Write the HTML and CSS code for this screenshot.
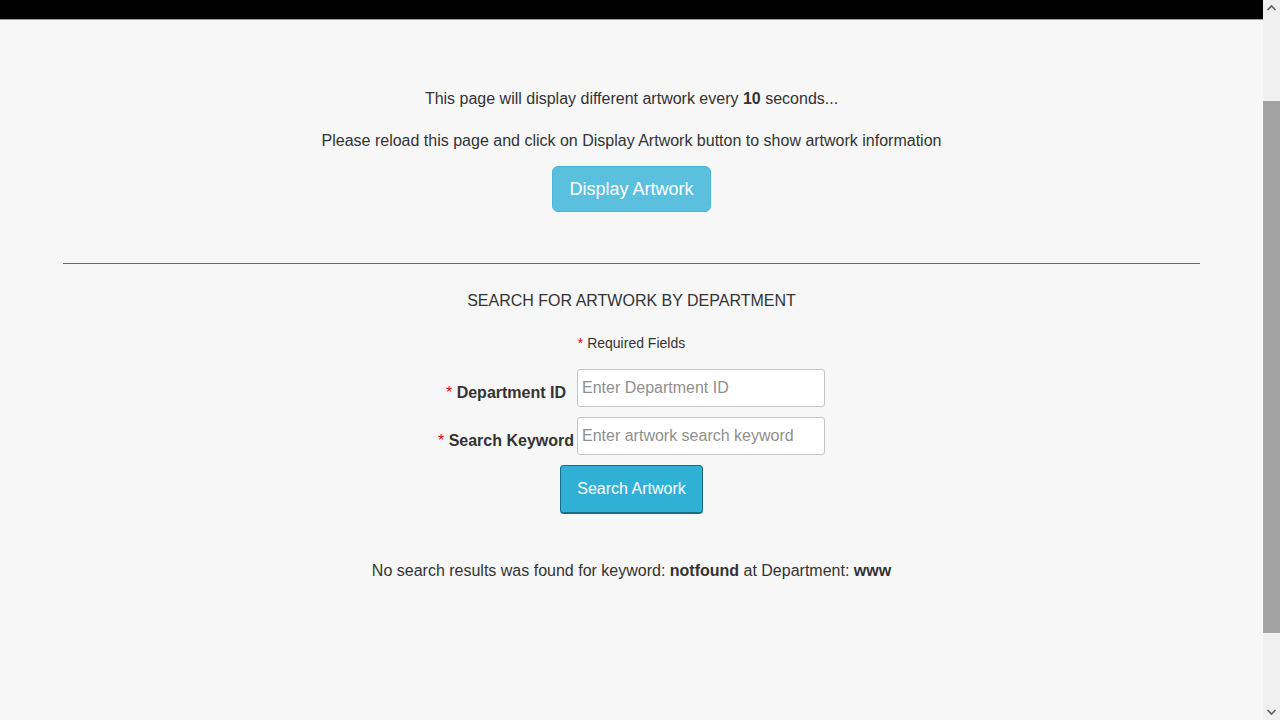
FILE: index.html
```html
<!DOCTYPE html>
<html lang="en">
<head>
<meta charset="utf-8">
<title>Artwork</title>
<link rel="stylesheet" href="styles.css">
</head>
<body>
<div class="window">
  <div class="page">
    <div class="topbar"></div>
    <section class="intro">
      <p class="line first">This page will display different artwork every <b>10</b> seconds...</p>
      <p class="line second">Please reload this page and click on Display Artwork button to show artwork information</p>
      <button class="btn btn-display" type="button">Display Artwork</button>
    </section>
    <hr class="divider">
    <section class="search">
      <h2 class="search-title">SEARCH FOR ARTWORK BY DEPARTMENT</h2>
      <p class="required-note"><span class="star">*</span> Required Fields</p>
      <form class="search-form">
        <div class="field-grid">
          <label class="field-label" for="dept"><span class="star">*</span> Department ID</label>
          <input class="field-input" id="dept" type="text" placeholder="Enter Department ID">
          <label class="field-label" for="kw"><span class="star">*</span> Search Keyword</label>
          <input class="field-input" id="kw" type="text" placeholder="Enter artwork search keyword">
        </div>
        <button class="btn btn-search" type="button">Search Artwork</button>
      </form>
      <p class="result">No search results was found for keyword: <b>notfound</b> at Department: <b>www</b></p>
    </section>
  </div>
  <div class="scrollbar">
    <div class="sb-btn">
      <svg width="17" height="17" viewBox="0 0 17 17"><path d="M4.5 10 L8.5 6 L12.5 10" fill="none" stroke="#606060" stroke-width="1.6"/></svg>
    </div>
    <div class="sb-track"><div class="sb-thumb"></div></div>
    <div class="sb-btn">
      <svg width="17" height="17" viewBox="0 0 17 17"><path d="M4.5 7 L8.5 11 L12.5 7" fill="none" stroke="#606060" stroke-width="1.6"/></svg>
    </div>
  </div>
</div>
</body>
</html>
```

FILE: styles.css
```css
html, body {
  margin: 0;
  padding: 0;
  height: 720px;
  overflow: hidden;
}
body {
  background: #f7f7f7;
  font-family: "Liberation Sans", Arial, sans-serif;
  font-size: 16px;
  color: #333;
}
.window {
  display: flex;
  height: 720px;
}
.page {
  flex: 1;
  min-width: 0;
}
.topbar {
  height: 19px;
  background: #000;
  border-bottom: 1px solid #9a9a9a;
}
.intro {
  display: flex;
  flex-direction: column;
  align-items: center;
  padding-top: 68px;
}
.line {
  margin: 0;
  line-height: 22px;
  text-align: center;
}
.second {
  margin-top: 20px;
}
.btn {
  font-family: "Liberation Sans", Arial, sans-serif;
  color: #fff;
  cursor: pointer;
}
.btn-display {
  margin-top: 14px;
  font-size: 18px;
  line-height: 24px;
  padding: 10px 16px;
  background: #5bc0de;
  border: 1px solid #46b8da;
  border-radius: 6px;
}
.divider {
  width: 90%;
  margin: 51px auto 0;
  border: 0;
  border-top: 1px solid #666;
  height: 0;
}
.search {
  display: flex;
  flex-direction: column;
  align-items: center;
}
.search-title {
  margin: 26px 0 0;
  font-size: 16px;
  font-weight: normal;
  line-height: 22px;
}
.required-note {
  margin: 21px 0 0;
  font-size: 14px;
  line-height: 20px;
}
.star {
  color: #e00;
  font-weight: normal;
}
.search-form {
  margin-top: 16px;
  display: flex;
  flex-direction: column;
  align-items: center;
}
.field-grid {
  display: grid;
  grid-template-columns: auto 248px;
  column-gap: 3px;
  row-gap: 10px;
}
.field-label {
  font-weight: bold;
  text-align: center;
  line-height: 22px;
  padding-top: 13px;
}
.field-input {
  box-sizing: border-box;
  width: 248px;
  height: 38px;
  margin: 0;
  padding: 6px 4px;
  font-family: "Liberation Sans", Arial, sans-serif;
  font-size: 16px;
  color: #333;
  background: #fff;
  border: 1px solid #c4c4c4;
  border-radius: 3px;
}
.field-input::placeholder {
  color: #8f8f8f;
}
.btn-search {
  margin-top: 10px;
  font-size: 16px;
  line-height: 22px;
  padding: 12px 16px;
  background: #31b0d5;
  border: 1px solid #1b6d85;
  border-bottom-width: 2px;
  border-radius: 4px;
}
.result {
  margin: 46px 0 0;
  line-height: 22px;
  text-align: center;
}
.scrollbar {
  width: 17px;
  flex: none;
  display: flex;
  flex-direction: column;
  background: #f0f0f0;
}
.sb-btn {
  height: 17px;
  flex: none;
}
.sb-btn svg {
  display: block;
}
.sb-track {
  flex: 1;
  padding-top: 84px;
}
.sb-thumb {
  height: 532px;
  background: #a3a3a3;
}
```
